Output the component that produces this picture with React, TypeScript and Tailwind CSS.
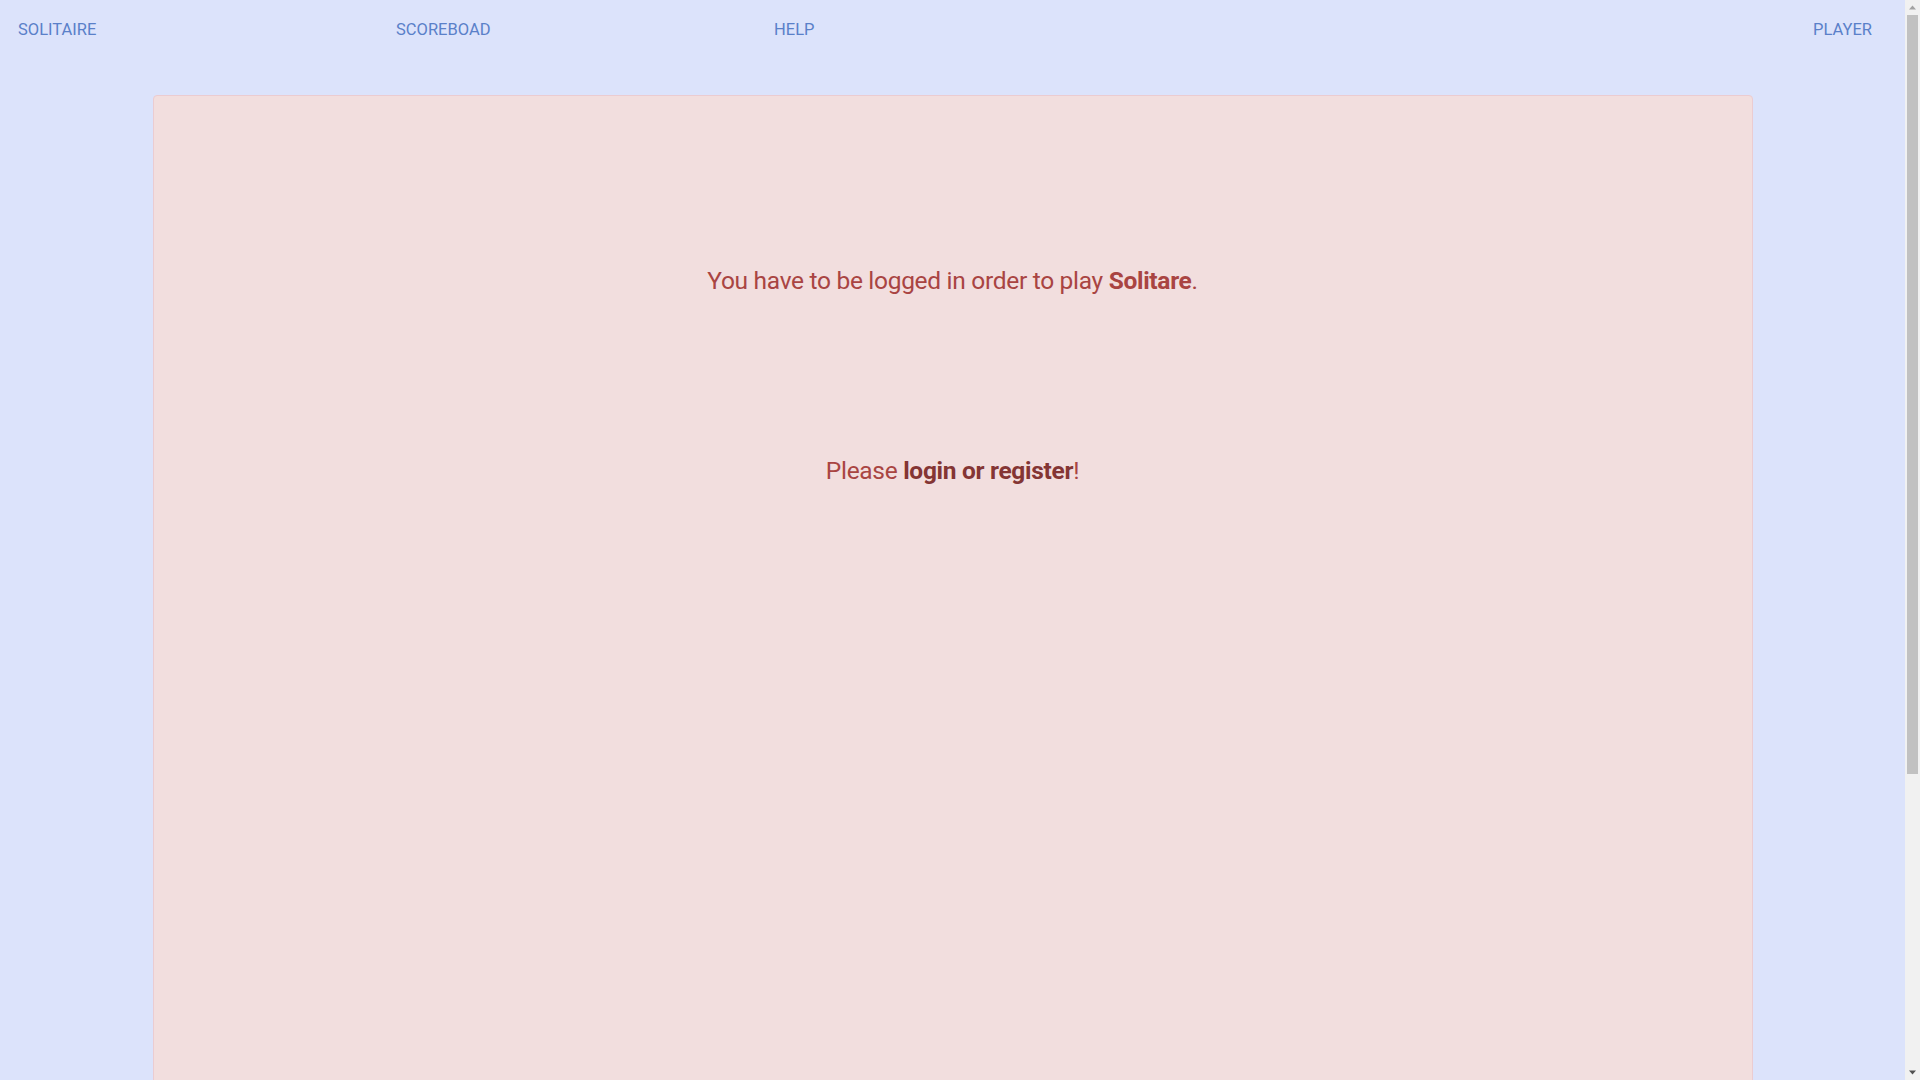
// Solitaire — logged-out landing
// Nav row on a pale blue page, one Bootstrap-style "danger" panel below it,
// and the browser's classic scrollbar down the right edge.

import React from "react";

const navLinks = ["SOLITAIRE", "SCOREBOAD", "HELP"];

function Scrollbar() {
  return (
    <div className="w-[15px] shrink-0 h-full bg-[#f1f1f1] flex flex-col items-center">
      {/* up arrow */}
      <svg width="15" height="15" viewBox="0 0 15 15" className="shrink-0">
        <path d="M4 9.5 L7.5 5.5 L11 9.5 Z" fill="#a3a3a3" />
      </svg>
      {/* thumb */}
      <div className="w-[11px] h-[759px] bg-[#c1c1c1]" />
      <div className="flex-1" />
      {/* down arrow */}
      <svg width="15" height="15" viewBox="0 0 15 15" className="shrink-0">
        <path d="M4 5.5 L11 5.5 L7.5 9.5 Z" fill="#505050" />
      </svg>
    </div>
  );
}

export default function App() {
  return (
    <div className="h-screen flex overflow-hidden bg-[#dce3fb] font-['Roboto','Noto_Sans',sans-serif]">
      <div className="flex-1 min-w-0 pb-5">
        {/* ── Top nav ─────────────────────────────────────────── */}
        <nav className="flex items-center h-[60px] pl-[18px] pr-[33px] text-[16.5px] text-[#5a80c9]">
          {navLinks.map((label) => (
            <a key={label} href="#" className="w-[378px] shrink-0">
              {label}
            </a>
          ))}
          <a href="#" className="ml-auto">
            PLAYER
          </a>
        </nav>

        {/* ── Login notice ────────────────────────────────────── */}
        <main className="mt-[35px] mx-auto w-[1600px] h-[1375px] rounded-[4px] border border-[#ebccd1] bg-[#f2dede] text-[#a94442] text-center">
          <p className="pt-[167px] text-[24.5px] tracking-[-0.3px]">
            You have to be logged in order to play{" "}
            <strong className="font-bold">Solitare</strong>.
          </p>
          <p className="mt-[153px] text-[24.5px] tracking-[-0.3px]">
            Please{" "}
            <a href="#" className="font-bold text-[#843534]">
              login or register
            </a>
            !
          </p>
        </main>
      </div>

      <Scrollbar />
    </div>
  );
}
